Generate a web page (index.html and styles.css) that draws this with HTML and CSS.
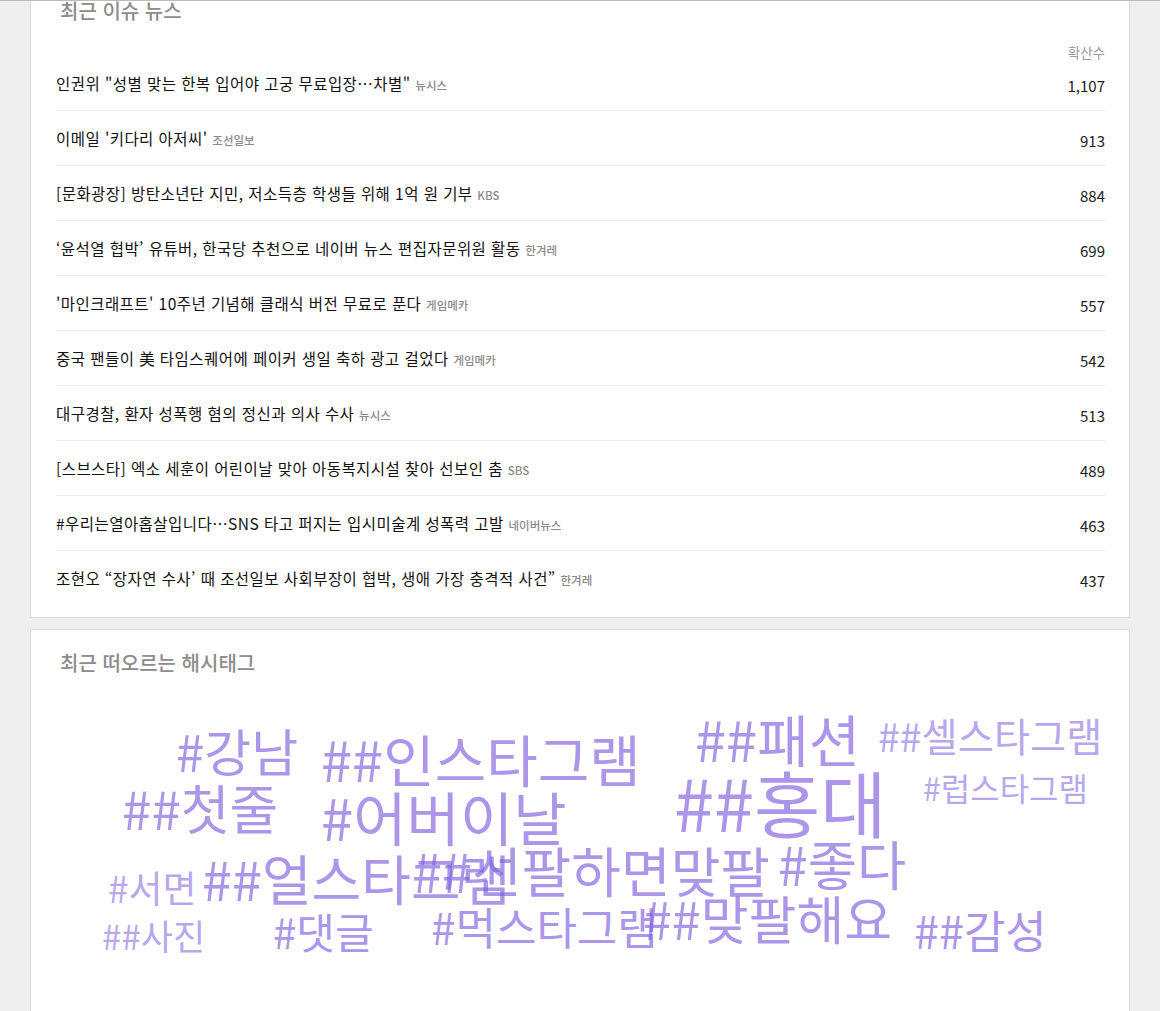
FILE: index.html
```html
<!DOCTYPE html>
<html lang="ko">
<head>
<meta charset="utf-8">
<title>최근 이슈</title>
<link rel="stylesheet" href="styles.css">
</head>
<body>
<div class="topline"></div>
<main class="page">
  <section class="card news-card">
    <h2 class="card-title">최근 이슈 뉴스</h2>
    <div class="news-head">확산수</div>
    <ul class="news-list">
      <li class="news-row"><span class="news-title">인권위 "성별 맞는 한복 입어야 고궁 무료입장…차별" <em class="src">뉴시스</em></span><span class="count">1,107</span></li>
      <li class="news-row"><span class="news-title">이메일 '키다리 아저씨' <em class="src">조선일보</em></span><span class="count">913</span></li>
      <li class="news-row"><span class="news-title">[문화광장] 방탄소년단 지민, 저소득층 학생들 위해 1억 원 기부 <em class="src">KBS</em></span><span class="count">884</span></li>
      <li class="news-row"><span class="news-title">‘윤석열 협박’ 유튜버, 한국당 추천으로 네이버 뉴스 편집자문위원 활동 <em class="src">한겨레</em></span><span class="count">699</span></li>
      <li class="news-row"><span class="news-title">'마인크래프트' 10주년 기념해 클래식 버전 무료로 푼다 <em class="src">게임메카</em></span><span class="count">557</span></li>
      <li class="news-row"><span class="news-title">중국 팬들이 美 타임스퀘어에 페이커 생일 축하 광고 걸었다 <em class="src">게임메카</em></span><span class="count">542</span></li>
      <li class="news-row"><span class="news-title">대구경찰, 환자 성폭행 혐의 정신과 의사 수사 <em class="src">뉴시스</em></span><span class="count">513</span></li>
      <li class="news-row"><span class="news-title">[스브스타] 엑소 세훈이 어린이날 맞아 아동복지시설 찾아 선보인 춤 <em class="src">SBS</em></span><span class="count">489</span></li>
      <li class="news-row"><span class="news-title">#우리는열아홉살입니다…SNS 타고 퍼지는 입시미술계 성폭력 고발 <em class="src">네이버뉴스</em></span><span class="count">463</span></li>
      <li class="news-row"><span class="news-title">조현오 “장자연 수사’ 때 조선일보 사회부장이 협박, 생애 가장 충격적 사건” <em class="src">한겨레</em></span><span class="count">437</span></li>
    </ul>
  </section>

  <section class="card tag-card">
    <h2 class="card-title">최근 떠오르는 해시태그</h2>
    <div class="cloud">
      <span class="tag" style="left:145px;top:49px;font-size:51px">#강남</span>
      <span class="tag" style="left:290px;top:54px;font-size:56px">##인스타그램</span>
      <span class="tag" style="left:664px;top:34px;font-size:56px">##패션</span>
      <span class="tag light" style="left:847px;top:39px;font-size:39.3px">##셀스타그램</span>
      <span class="tag" style="left:643px;top:89px;font-size:72px">##홍대</span>
      <span class="tag light" style="left:892px;top:95px;font-size:32px">#럽스타그램</span>
      <span class="tag" style="left:91px;top:105px;font-size:53px">##첫줄</span>
      <span class="tag" style="left:290px;top:111px;font-size:58px">#어버이날</span>
      <span class="tag" style="left:171px;top:175px;font-size:54px">##얼스타그램</span>
      <span class="tag" style="left:381px;top:167px;font-size:54px">##선팔하면맞팔</span>
      <span class="tag" style="left:747px;top:160px;font-size:53.5px">#좋다</span>
      <span class="tag light" style="left:77px;top:193px;font-size:37px">#서면</span>
      <span class="tag" style="left:612px;top:216px;font-size:52px">##맞팔해요</span>
      <span class="tag" style="left:400px;top:228px;font-size:44px">#먹스타그램</span>
      <span class="tag light" style="left:71px;top:241px;font-size:35px">##사진</span>
      <span class="tag" style="left:242px;top:234px;font-size:42px">#댓글</span>
      <span class="tag" style="left:883px;top:231px;font-size:45px">##감성</span>
    </div>
  </section>
</main>
</body>
</html>
```

FILE: styles.css
```css
* { box-sizing: border-box; }
html, body { margin: 0; padding: 0; }
body {
  background: #eeeeee;
  font-family: "Noto Sans CJK KR", "Noto Sans", sans-serif;
  color: #222;
  overflow: hidden;
}
.topline {
  position: fixed;
  top: 0; left: 0; right: 0;
  height: 1px;
  background: #bdbdbd;
  z-index: 10;
}
.page {
  padding: 0 30px;
  margin-top: -23px;
}
.card {
  background: #fff;
  border: 1px solid #dadaea;
}
.card-title {
  margin: 0;
  padding: 20px 0 0 4px;
  font-size: 20px;
  line-height: 26px;
  font-weight: 500;
  color: #8c8c8c;
}
.news-card {
  padding: 0 24px 12px 25px;
}
.news-head {
  margin-top: 20px;
  margin-bottom: -4px;
  line-height: 16px;
  font-size: 13.5px;
  color: #9a9a9a;
  text-align: right;
}
.news-list {
  list-style: none;
  margin: 0;
  padding: 0;
}
.news-row {
  display: flex;
  justify-content: space-between;
  align-items: center;
  height: 55px;
  border-bottom: 1px solid #ebebeb;
}
.news-row:last-child { border-bottom: none; height: 54px; }
.news-title {
  font-size: 15.5px;
  letter-spacing: 0.45px;
  color: #111;
}
.src {
  font-style: normal;
  font-size: 11.5px;
  letter-spacing: 0;
  color: #8a8a8a;
  font-weight: 500;
}
.count {
  font-size: 15px;
  color: #222;
  padding-top: 5px;
}
.tag-card {
  margin-top: 11px;
}
.tag-card .card-title {
  padding-left: 29px;
}
.cloud {
  position: relative;
  height: 340px;
}
.tag {
  position: absolute;
  white-space: nowrap;
  line-height: 1;
  color: rgb(128, 96, 224);
  opacity: 0.66;
}
.tag.light { opacity: 0.55; }
```
